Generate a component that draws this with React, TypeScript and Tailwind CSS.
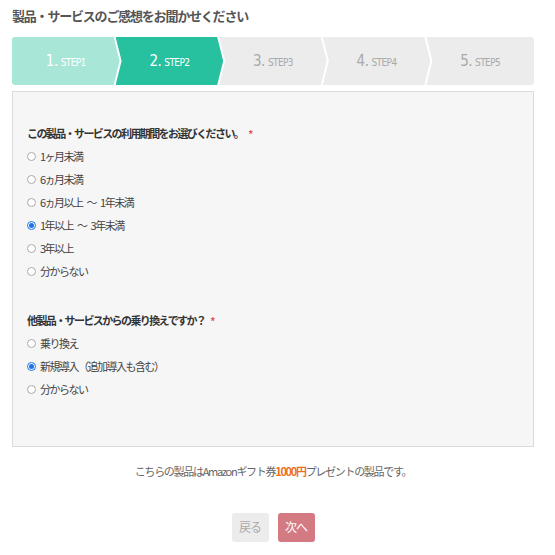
import React from "react"

const jp = { fontFamily: '"Noto Sans CJK JP", "Noto Sans", sans-serif' }

const steps = [
  { n: "1.", label: "STEP1", cls: "bg-[#a8e6d8] text-white" },
  { n: "2.", label: "STEP2", cls: "bg-[#27c19f] text-white" },
  { n: "3.", label: "STEP3", cls: "bg-[#ececec] text-[#a9a9a9]" },
  { n: "4.", label: "STEP4", cls: "bg-[#ececec] text-[#a9a9a9]" },
  { n: "5.", label: "STEP5", cls: "bg-[#ececec] text-[#a9a9a9]" },
]

const clips = [
  "[clip-path:polygon(0_0,calc(100%-6px)_0,100%_50%,calc(100%-6px)_100%,0_100%)]",
  "-ml-[4px] [clip-path:polygon(0_0,calc(100%-6px)_0,100%_50%,calc(100%-6px)_100%,0_100%,6px_50%)]",
  "-ml-[4px] [clip-path:polygon(0_0,calc(100%-6px)_0,100%_50%,calc(100%-6px)_100%,0_100%,6px_50%)]",
  "-ml-[4px] [clip-path:polygon(0_0,calc(100%-6px)_0,100%_50%,calc(100%-6px)_100%,0_100%,6px_50%)]",
  "-ml-[4px] [clip-path:polygon(0_0,100%_0,100%_100%,0_100%,6px_50%)]",
]

function Radio({ label, checked }: { label: string; checked?: boolean }) {
  const parts = label.split(" ")
  return (
    <label className="flex items-center h-[23px] gap-[4px]">
      {checked ? (
        <span className="w-[9px] h-[9px] rounded-full border border-[#1a73e8] bg-white flex items-center justify-center">
          <span className="w-[5px] h-[5px] rounded-full bg-[#1a73e8]" />
        </span>
      ) : (
        <span className="w-[9px] h-[9px] rounded-full border border-[#aaa] bg-white" />
      )}
      <span className="flex items-center gap-[4px] text-[11px] tracking-[-1.5px] text-[#444]">
        {parts.map((p, i) => (
          <span key={i}>{p}</span>
        ))}
      </span>
    </label>
  )
}

function Question({ title, options, checked }: { title: string; options: string[]; checked: number }) {
  return (
    <div>
      <div className="h-[23px] flex items-center text-[11px] tracking-[-1.6px] font-bold text-[#333]">
        {title}
        <span className="text-[#e0554f] ml-[5px] text-[10px]">*</span>
      </div>
      {options.map((o, i) => (
        <Radio key={o} label={o} checked={i === checked} />
      ))}
    </div>
  )
}

export default function App() {
  return (
    <main className="w-[555px] h-[555px] bg-white overflow-hidden" style={jp}>
      <div className="w-[522px] ml-[12px]">
        <h1 className="pt-[7px] h-[37px] text-[13px] leading-[18px] font-bold tracking-[-1.2px] text-[#555]">
          製品・サービスのご感想をお聞かせください
        </h1>

        {/* steps */}
        <div className="flex h-[48px] rounded-[3px] overflow-hidden">
          {steps.map((s, i) => (
            <div
              key={s.label}
              className={`flex-1 flex items-center justify-center gap-[3px] ${s.cls} ${clips[i]}`}
              style={{ fontFamily: '"Liberation Sans Narrow", "DejaVu Sans Condensed", sans-serif' }}
            >
              <span className="text-[15px] tracking-[-0.5px]">{s.n}</span>
              <span className="text-[10px] mt-[3px] tracking-[-0.6px]">{s.label}</span>
            </div>
          ))}
        </div>

        {/* form panel */}
        <div className="mt-[6px] h-[356px] bg-[#f6f6f6] border border-[#dcdcdc] pl-[14px] pt-[30px] flex flex-col gap-[26px]">
          <Question
            title="この製品・サービスの利用期間をお選びください。"
            options={["1ヶ月未満", "6ヵ月未満", "6ヵ月以上 ～ 1年未満", "1年以上 ～ 3年未満", "3年以上", "分からない"]}
            checked={3}
          />
          <Question
            title="他製品・サービスからの乗り換えですか？"
            options={["乗り換え", "新規導入（追加導入も含む）", "分からない"]}
            checked={1}
          />
        </div>

        <p className="mt-[16px] text-center text-[11px] tracking-[-1.3px] text-[#666]">
          こちらの製品はAmazonギフト券<span className="text-[#f07020] font-bold">1000円</span>プレゼントの製品です。
        </p>

        <div className="mt-[33px] flex justify-center gap-[9px]">
          <button className="w-[37px] h-[29px] rounded-[3px] bg-[#ececec] text-[#aaa] text-[12px] tracking-[-1px]">戻る</button>
          <button className="w-[37px] h-[29px] rounded-[3px] bg-[#d47a83] text-white text-[12px] tracking-[-1px]">次へ</button>
        </div>
      </div>
    </main>
  )
}
